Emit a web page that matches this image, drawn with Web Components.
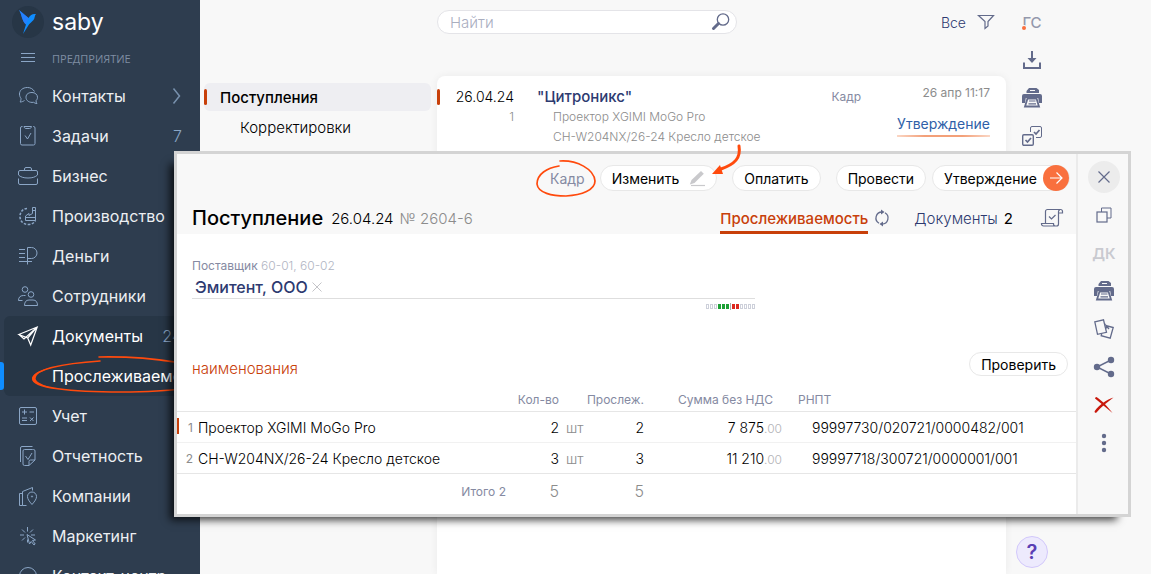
<!DOCTYPE html>
<html lang="ru">
<head>
<meta charset="utf-8">
<title>Saby — Поступления</title>
<style>
  html, body { margin: 0; height: 100%; }
  body {
    font-family: Inter, "Liberation Sans", sans-serif;
    font-size: 14px;
    font-weight: 300;
    color: #000;
    background: #f8f8f8;
    overflow: hidden;
    --accent: #c8400a;
    --muted: #858aa2;
    --gray: #8c8c8c;
    --navy: #2d3a70;
    --icon: #636b8b;
    --line: #e6e6e6;
  }
</style>
</head>
<body>
<saby-app></saby-app>

<script>
const ICONS = {
  bird: [32, 32, `<g stroke="none"><circle cx="16" cy="16" r="16" fill="#273646"/><path d="M7 4l9.500 8c2-3.500 4-4.500 7.500-4-1.500 1.500-1 4-2.500 6-1.500 2-4 3-5.500 6l-5 8 3-9.500C9.500 14.500 10 8.500 7 4z" fill="#0f8dff"/><path d="M7 4l9.500 8-2.500 6.500C9.500 14.500 10 8.500 7 4z" fill="#2f7bff" opacity=".7"/></g>`],
  menu: [16, 12, `<path d="M1 1.500h14M1 5.500h14M1 9.500h14" fill="none" stroke="currentColor"/>`],
  chevron: [10, 18, `<path d="M1.500 1.500L7.500 9l-6 7.500" stroke-width="1.500" opacity=".8"/>`],
  chat: [20, 20, `<path d="M16.500 5.500C15 3 12.500 1.500 9.500 1.500c-5 0-8 3-8 6.500 0 2 .8 3.500 1.500 4.500 0 1.800-.5 3-1 3.500 2 0 3.500-.8 4.500-1.500"/><path d="M14 6.500c3 0 5.500 2 5.500 4.800 0 1.600-.8 2.700-1.500 3.400 0 1.300.5 2.300 1 2.800-1.500 0-2.700-.6-3.500-1.200-4 .6-7.500-1.500-7.500-5s3-4.800 6-4.800z"/>`],
  tasks: [20, 20, `<path d="M4.500.5H4A1.500 1.500 0 0 0 2.500 2v15.500A1.500 1.500 0 0 0 4 19h11.500a1.500 1.500 0 0 0 1.500-1.500V2A1.500 1.500 0 0 0 15.500.5H15M6 .5c.3 1.500 1 2 2 2h3.500c1 0 1.700-.5 2-2zM7 9.500l2.500 3.500L13 7"/>`],
  brief: [20, 20, `<path d="M6.500 4.500V3A1.500 1.500 0 0 1 8 1.500h4A1.500 1.500 0 0 1 13.500 3v1.500M2 4.500h16A1.500 1.500 0 0 1 19.500 6v3c-2 2-5 3-9.500 3S2.500 11 .5 9V6A1.500 1.500 0 0 1 2 4.500zM.5 12.500V17A1.500 1.500 0 0 0 2 18.500h16a1.500 1.500 0 0 0 1.500-1.500v-4.500"/>`],
  factory: [20, 20, `<path d="M7.500 14.500h10V1.500h-3v6l-3.500 2v-2l-3.500 2.500zM7.500 11.500h10M14.500 4.500h3"/><path d="M9 2.500C5 2.500 2 6 2 10.500s3.500 8 8 8c4 0 6.500-2 7.500-4" stroke-width="1.600" stroke-dasharray="2.500 1.500"/>`],
  ruble: [20, 20, `<path d="M9.500 18.500V1.500h4a5 5 0 0 1 0 11H9.500M1 3.500h6M1 7.500h6M1 11.500h6M1 15.500h13"/>`],
  people: [20, 20, `<circle cx="7" cy="3.500" r="2.800"/><circle cx="13" cy="8.500" r="2.800"/><path d="M.5 14.500c0-3 1.500-5 5-5h2M4.500 14.500h-4M6.500 19.500c0-3.500 1.500-5.500 4.500-5.500h4c3 0 4.500 2 4.500 5.500z"/>`],
  plane: [20, 20, `<path d="M.8 8.500L19.200 1l-6.500 18-3-7zM9.700 12L19 1.200M1 8.500l5 4.500L19 1.200" stroke-width="1.200"/>`],
  calc: [20, 20, `<rect x="1.500" y="1.500" width="17" height="17" rx="1.500"/><path d="M4 6h5M6.500 3.500v5M11.500 6h4.500M4 12h5M4 14.500h5M12 11.500l3.500 3.500M15.500 11.500L12 15"/>`],
  report: [20, 20, `<path d="M2.500 16V2A1.500 1.500 0 0 1 4 .5h10.500M14.500 3.500h-8A1.500 1.500 0 0 0 5 5v13A1.500 1.500 0 0 0 6.500 19.500H11l6-5.500V5a1.500 1.500 0 0 0-1.500-1.500zM11 19v-3.500a1.500 1.500 0 0 1 1.500-1.500H17M7.500 10l2.500 3.500L14 7"/>`],
  company: [20, 20, `<path d="M8.500 19.500h-4v-14l10-4v3M4.500 7.500h-3v12h3M14 18.500c-3-3.500-4.500-5.500-4.500-8a4.500 4.500 0 0 1 9 0c0 2.500-1.500 4.500-4.500 8z"/><circle cx="14" cy="10.500" r=".6"/>`],
  marketing: [20, 20, `<path d="M9.500 1v4.500M9.500 13.500v3M2 9h4M13 9h4M4 3.500l3 3M15 3.500l-3 3M4 14.500l3-3M9 8.500l2.500 9.500 1.700-2.500 2.800 3.500 1.200-1-2.700-3.500 3-.5z"/>`],
  head: [20, 20, `<path d="M1.500 14V10a8.500 8.500 0 0 1 17 0v4"/>`],
  search: [18, 18, `<circle cx="11" cy="6.500" r="5.700" stroke-width="1.300"/><path d="M6.500 10.500L1.500 15.500" stroke-width="3" stroke-linecap="round"/>`],
  filter: [16, 16, `<path d="M.5 1.500h15l-5.500 6v4.500L7 14.500v-7z" stroke-width="1.200"/>`],
  download: [20, 20, `<path d="M10 1v9" stroke-width="2"/><path d="M5.500 8h9l-4.500 5z" fill="currentColor" stroke="none"/><path d="M2 12.500V18h16v-5.500" stroke-width="2"/>`],
  printer: [20, 20, `<path d="M7 0h7.500l2.500 2v3H4.500V3z M2 6h16a2 2 0 0 1 2 2v7h-3l-.8-5H3.800L3 15H0V8a2 2 0 0 1 2-2z" fill="currentColor" stroke="none"/><path d="M8 2.500h5M4.500 5.500h11" stroke="#f8f8f8"/><path d="M5.500 10.500h9l2.500 8H3z" fill="#f8f8f8" stroke-width="1.800"/><path d="M7 13h6.500M6.500 15.800h7.500" stroke-width="1.200"/>`],
  checks: [20, 20, `<path d="M8.500 6V2A1.500 1.500 0 0 1 10 .5h8A1.500 1.500 0 0 1 19.500 2v8a1.500 1.500 0 0 1-1.500 1.500h-4"/><rect x=".7" y="8.700" width="10.600" height="10.600" rx="1.200" stroke-width="1.400"/><path d="M3.500 14l2 2 3.500-4M12 6l2 2 3.500-4" stroke-width="1.700"/>`],
  pencil: [16, 18, `<path d="M12 2l2.800 2.800L5.500 14 .8 15.500 2.500 11z" fill="currentColor" stroke="none"/><path d="M2 16.500h14" stroke-width="1.200"/>`],
  arrow: [14, 14, `<path d="M1 7h12M7.500 1.500L13 7l-5.500 5.500" stroke-width="1.200"/>`],
  close: [14, 14, `<path d="M1.500 1.500l11 11M12.500 1.500l-11 11" stroke-width="1.200"/>`],
  clear: [10, 10, `<path d="M.5.5l9 9M9.500.5l-9 9"/>`],
  windows: [16, 16, `<path d="M5.500 5V1h9.500v10h-4"/><rect x="1" y="5" width="10" height="10" stroke-width="1.200"/>`],
  copies: [20, 20, `<path d="M.8 2.800L9.500.8l3 12.500-9 2z" stroke-width="1.300"/><path d="M11.500 6.500l7.700 2-3 10.700-9-2.500.5-2M12.500 9.500l-.5-3 3 3.500" stroke-width="1.300"/>`],
  share: [20, 20, `<path d="M17 3L3 10l14 7" stroke-width="1.400"/><circle cx="17" cy="3" r="3.200" fill="currentColor" stroke="none"/><circle cx="3" cy="10" r="3.200" fill="currentColor" stroke="none"/><circle cx="17" cy="17" r="3.200" fill="currentColor" stroke="none"/>`],
  remove: [20, 18, `<path d="M1 2.500Q1 1 2.500 1C8 4.500 14 11 18.500 17 12.500 12 6 6.500 1 2.500z M.8 15C5 9 12 4 19.500 1.500 13 6.500 7 11 2.500 16.500 1.500 17.500 0 16 .8 15z" fill="currentColor" stroke="none"/>`],
  dots: [6, 20, `<g fill="currentColor" stroke="none"><circle cx="3" cy="3" r="2.200"/><circle cx="3" cy="10" r="2.200"/><circle cx="3" cy="17" r="2.200"/></g>`],
  refresh: [14, 18, `<path d="M4 14.200A6 6 0 0 1 7 3M10 3.800A6 6 0 0 1 7 15" stroke-width="1.300"/><path d="M6 .5l3.500 2.500L6 5.500zM8 17.500L4.500 15 8 12.500z" fill="currentColor" stroke="none"/>`],
  scroll: [22, 18, `<path d="M4.500 14.500V2.500a2 2 0 0 1 2-2h13a2 2 0 0 1 2 2v1.500h-4M19 .8c-1 0-1.500.8-1.500 1.700v12.500a2 2 0 0 1-2 2H2.500a2 2 0 0 1-2-2v-.5h12v.5a2 2 0 0 0 2 2M8 7.500l2.500 2.500L14.500 6" stroke-width="1.200"/>`]
};

/* Registers an element whose open root holds the given styles and markup. */
function define(tag, css, html) {
  customElements.define(tag, class extends HTMLElement {
    connectedCallback() {
      if (this.shadowRoot) return;
      const root = this.attachShadow({ mode: 'open' });
      const tpl = document.createElement('template');
      tpl.innerHTML = `<style>*{box-sizing:border-box}button,input{font:inherit;color:inherit}${css}</style>` +
        (typeof html === 'function' ? html(this) : html);
      root.append(tpl.content.cloneNode(true));
    }
  });
}

define('ui-icon', `:host{display:inline-flex;flex:none}svg{display:block;fill:none;stroke:currentColor;overflow:visible}`,
  el => {
    const [w, h, body] = ICONS[el.getAttribute('name')];
    return `<svg width="${w}" height="${h}" viewBox="0 0 ${w} ${h}" aria-hidden="true">${body}</svg>`;
  });

define('nav-item', `
  :host{display:block;position:relative}
  a{display:flex;align-items:center;height:40px;padding:0 18px;gap:14px;color:#eceff2;text-decoration:none;font-size:16px;font-weight:400;white-space:nowrap}
  ui-icon,.slot-space{color:#8ba6c6;width:20px}
  :host([active]) a,:host([active]) ui-icon{color:#fff}
  .label{flex:1;min-width:0}
  ::slotted(*){color:#8ba6c6;font-weight:300}`,
  el => `<a href="#">${el.hasAttribute('icon') ? `<ui-icon name="${el.getAttribute('icon')}"></ui-icon>` : '<span class="slot-space"></span>'}
    <span class="label">${el.getAttribute('label')}</span><slot></slot></a>`);

define('side-bar', `
  :host{display:block;width:200px;background:#2e3d4f;overflow:hidden;position:relative}
  .brand{display:flex;align-items:center;gap:8px;height:44px;padding:0 12px;color:#fff;font-size:23px;font-weight:400}
  .section{display:flex;align-items:center;height:28px;padding:0 20px;gap:16px;color:#7f8da3;font:11px "Open Sans",sans-serif}
  .section button{border:0;padding:0;background:none;color:#8ba6c6;display:flex}
  nav{display:block;padding-top:4px}
  .group{margin-left:4px;background:#273646;border-radius:6px 0 0 6px;position:relative}
  .group nav-item{margin-left:-4px}
  .current{position:absolute;left:-4px;top:46px;width:4px;height:28px;background:#0f8dff;border-radius:0 3px 3px 0}
  .ring{position:absolute;left:26px;top:38px;pointer-events:none}`,
  `<div class="brand"><ui-icon name="bird"></ui-icon><span>saby</span></div>
   <div class="section"><button aria-label="Меню"><ui-icon name="menu"></ui-icon></button><span>ПРЕДПРИЯТИЕ</span></div>
   <nav>
    <nav-item icon="chat" label="Контакты"><ui-icon name="chevron"></ui-icon></nav-item>
    <nav-item icon="tasks" label="Задачи"><span>7</span></nav-item>
    <nav-item icon="brief" label="Бизнес"></nav-item>
    <nav-item icon="factory" label="Производство"></nav-item>
    <nav-item icon="ruble" label="Деньги"></nav-item>
    <nav-item icon="people" label="Сотрудники"></nav-item>
    <div class="group">
      <nav-item icon="plane" label="Документы" active><span>24</span></nav-item>
      <nav-item label="Прослеживаемость" active></nav-item>
      <span class="current"></span>
      <svg class="ring" width="190" height="42" viewBox="0 0 190 42" fill="none" stroke="#ff4a0d" stroke-linecap="round"><path d="M70 7C40 9 8 13 3 24c-3 10 40 14 88 14 50 0 90-5 92-15C184 11 120 2 69 3" stroke-width="1.600"/><path d="M28 12C12 15 3 19 2 24c0 5 8 8 20 10C10 30 4 27 6 23c1-4 9-8 22-11z" fill="#ff4a0d" stroke="none"/></svg>
    </div>
    <nav-item icon="calc" label="Учет"></nav-item>
    <nav-item icon="report" label="Отчетность"></nav-item>
    <nav-item icon="company" label="Компании"></nav-item>
    <nav-item icon="marketing" label="Маркетинг"></nav-item>
    <nav-item icon="head" label="Контакт-центр"></nav-item>
   </nav>`);

define('folder-list', `
  :host{display:block;padding:83px 6px 0 4px;font-size:15px}
  a{display:flex;align-items:center;height:28px;color:#000;text-decoration:none;white-space:nowrap}
  .on{position:relative;padding-left:16px;background:#eeeef2;border-radius:6px;font-weight:500}
  .on::before{content:"";position:absolute;left:0;top:6px;width:3px;height:16px;background:var(--accent);border-radius:2px}
  .sub{height:32px;padding-left:36px}`,
  `<a class="on" href="#">Поступления</a><a class="sub" href="#">Корректировки</a>`);

define('search-bar', `
  :host{display:flex;align-items:center;justify-content:space-between;height:44px;padding-right:12px;color:var(--navy)}
  label{display:flex;align-items:center;width:300px;height:24px;padding:0 6px 0 12px;border:1px solid #e4e4e8;border-radius:12px;background:#fff}
  input{flex:1;min-width:0;border:0;padding:0;background:none;outline:0;font-size:15px;color:#000}
  input::placeholder{color:#a9aebf;opacity:1}
  ui-icon{color:var(--icon)}
  button{display:flex;align-items:center;gap:12px;border:0;padding:0;background:none;font-size:14px}`,
  `<label><input type="search" placeholder="Найти" aria-label="Найти"><ui-icon name="search"></ui-icon></label>
   <button>Все <ui-icon name="filter"></ui-icon></button>`);

define('receipt-card', `
  :host{display:block;flex:1;background:#fff;border-radius:8px 8px 0 0;box-shadow:0 0 8px rgba(0,0,0,.06)}
  article{position:relative;display:grid;grid-template-columns:77px 1fr auto auto;padding:11px 16px 0 0;font-size:12px;line-height:20px;color:var(--gray);white-space:nowrap}
  article::before{content:"";position:absolute;left:0;top:13px;width:3px;height:16px;background:var(--accent);border-radius:2px}
  .left{text-align:right}
  .date{font-size:14px;color:#000}
  .body{padding-left:23px}
  h3{margin:0;font-size:15px;font-weight:500;color:var(--navy);line-height:20px}
  p{margin:0;padding-left:16px}
  .who{color:var(--muted);font-weight:400}
  .state{padding-left:36px;text-align:right;margin-top:-4px}
  .state div{font-weight:400}
  .state a{display:inline-block;margin-top:12px;height:22px;font-size:14px;font-weight:400;line-height:18px;color:#2f5fa8;text-decoration:none;border-bottom:2px solid;border-image:linear-gradient(90deg,#fbd9c8,#f3a079 30%,#f3a079 70%,#fbd9c8) 1}`,
  `<article><div class="left"><div class="date">26.04.24</div><div>1</div></div>
   <div class="body"><h3>"Цитроникс"</h3><p>Проектор XGIMI MoGo Pro</p><p>CH-W204NX/26-24 Кресло детское</p></div>
   <div class="who">Кадр</div>
   <div class="state"><div>26 апр 11:17</div><a href="#">Утверждение</a></div></article>`);

define('tool-rail', `
  :host{display:flex;flex-direction:column;align-items:center;color:var(--icon)}
  button{display:flex;align-items:center;justify-content:center;width:38px;height:38px;border:0;padding:0;background:none}
  .initials{position:relative;font-size:15px;font-weight:500;height:38px;margin-top:3px;color:#9498ac}
  .initials::after{content:"";position:absolute;left:9px;top:23px;width:4px;height:4px;border-radius:50%;background:#f9703e;box-shadow:0 0 0 1px #f8f8f8}
  .help{width:32px;height:32px;margin:auto 0 6px;border:1px solid #d2c8fb;border-radius:50%;background:#edeafd;color:#5a3fb5;font-size:20px;font-weight:600}`,
  `<button class="initials">ГС</button>
   <button aria-label="Скачать"><ui-icon name="download"></ui-icon></button>
   <button aria-label="Печать"><ui-icon name="printer"></ui-icon></button>
   <button aria-label="Отметить"><ui-icon name="checks"></ui-icon></button>
   <button class="help">?</button>`);

define('pill-button', `
  :host{display:inline-block}
  button{display:flex;align-items:center;gap:10px;height:26px;padding:0 11px;border:1px solid #e8e8e8;border-radius:13px;background:#fff;font-size:14px;font-weight:400;color:#000;white-space:nowrap}
  :host([primary]) button{padding-right:0;gap:6px}
  :host([plain]) button{height:24px}
  ::slotted(ui-icon){color:#c9c9cc}`,
  `<button><slot></slot></button>`);

define('balance-meter', `
  :host{display:flex;gap:1px;align-items:center;height:6px}
  i{width:3px;height:5px;border:1px solid #cdd0da}
  .g{background:#1ba034;border-color:#1ba034}.r{background:#dc281e;border-color:#dc281e}
  b{width:1px;height:7px;background:#aaa}`,
  `<i></i><i></i><i></i><i class="g"></i><i class="g"></i><i class="g"></i><b></b><i class="r"></i><i class="r"></i><i></i><i></i><i></i><i></i>`);

define('goods-table', `
  :host{display:block}
  table{width:100%;border-collapse:collapse;table-layout:fixed;font-size:14px;white-space:nowrap}
  th,td{padding:0;text-align:right;font-weight:inherit}
  th,.idx,.sum-label{font-size:12px;color:var(--muted);font-weight:400}
  th{height:23px}
  tbody td{height:31px;padding-top:2px;border-top:1px solid var(--line)}
  tbody tr + tr td{border-top-color:#f1f1f1}
  tfoot td{height:36px;border-top:1px solid var(--line);font-size:16px;color:var(--gray)}
  tfoot .sum-label{font-size:12px}
  .idx{padding-right:5px;color:var(--gray);position:relative}
  .now::before{content:"";position:absolute;left:0;top:6px;width:2px;height:16px;background:var(--accent)}
  .name,.unit,.code{text-align:left}
  .unit{padding-left:7px;color:var(--gray)}
  small{font-size:12px;color:#b4b4b8}
  th.sum{padding-right:9px}
  th.code{padding-left:16px}
  td.code{padding-left:30px}`,
  `<table><colgroup><col style="width:21px"><col><col style="width:53px"><col style="width:27px"><col style="width:58px"><col style="width:138px"><col style="width:294px"></colgroup>
   <thead><tr><th></th><th></th><th>Кол-во</th><th></th><th>Прослеж.</th><th class="sum">Сумма без НДС</th><th class="code">РНПТ</th></tr></thead>
   <tbody>
   <tr><td class="idx now">1</td><td class="name">Проектор XGIMI MoGo Pro</td><td>2</td><td class="unit">шт</td><td>2</td><td>7 875<small>.00</small></td><td class="code">99997730/020721/0000482/001</td></tr>
   <tr><td class="idx">2</td><td class="name">CH-W204NX/26-24 Кресло детское</td><td>3</td><td class="unit">шт</td><td>3</td><td>11 210<small>.00</small></td><td class="code">99997718/300721/0000001/001</td></tr>
   </tbody>
   <tfoot><tr><td></td><td class="sum-label">Итого 2</td><td>5</td><td></td><td>5</td><td></td><td></td></tr></tfoot></table>`);

define('receipt-dialog', `
  :host{display:flex;background:#fff;border:3px solid #d4d4d4;box-shadow:-9px 8px 8px -5px rgba(0,0,0,.75)}
  .doc{flex:1;min-width:0;padding-bottom:5px}
  header{background:#f8f8f8;height:80px}
  .actions{display:flex;align-items:center;justify-content:flex-end;height:48px;padding:0 6px 0 16px}
  .author{position:relative;padding:0 15px;font-size:14px;font-weight:400;color:var(--muted)}
  .ring{position:absolute;left:0;top:-10px}
  .edit,.pay{margin-right:15px}
  .post{margin-right:6px}
  .go{display:flex;align-items:center;justify-content:center;width:26px;height:26px;border-radius:50%;background:#f9703e;color:#fff}
  .go ui-icon{color:#fff}
  .title{display:flex;align-items:center;height:32px;padding:0 13px 0 15px;font-size:15px;white-space:nowrap}
  h1{margin:0 8px 0 0;font-size:20px;line-height:28px;font-weight:500}
  .num{margin-left:6px;color:var(--gray)}
  .tabs{margin-left:auto;display:flex;align-items:center;height:32px}
  .tabs a{display:flex;align-items:center;height:32px;color:var(--navy);text-decoration:none}
  .tabs a.on{font-weight:500;color:var(--accent);border-bottom:3px solid var(--accent);padding-top:3px}
  .tabs ui-icon{color:var(--icon);margin-left:7px}
  .tabs .docs{margin-left:25px;gap:6px}
  .tabs b{font-weight:400;color:#000}
  .tabs ui-icon.list{margin-left:28px}
  .supplier{width:563px;margin:22px 0 0 15px}
  .caption{font-size:12px;line-height:20px;color:var(--muted);font-weight:400}
  .caption span{color:#b0b4c2;font-weight:300}
  .value{display:flex;align-items:center;gap:4px;height:23px;padding-left:3px;border-bottom:1px solid #dedede;font-size:16px;font-weight:500}
  .value a{color:var(--navy);text-decoration:none}
  .value button{display:flex;border:0;padding:0;background:none;color:#c4c4c8}
  balance-meter{margin-top:4px;justify-content:flex-end}
  .goods{display:flex;align-items:flex-end;justify-content:space-between;margin-top:41px;height:26px;padding:0 8px 0 15px}
  h2{margin:0;font-size:15px;line-height:14px;font-weight:300;color:var(--accent)}
  goods-table{margin-top:12px}
  .rail{display:flex;flex-direction:column;align-items:center;width:52px;padding:4px 0 0 2px;background:#f8f8f8;border-left:2px solid #ebebeb;color:var(--icon)}
  .rail button{display:flex;align-items:center;justify-content:center;width:38px;height:38px;border:0;padding:0;background:none}
  .rail .close{width:32px;height:32px;margin:3px 0;border-radius:50%;background:#ececec}
  .rail .off{color:#c9cad0;font-size:15px;font-weight:600}
  .rail .del{color:#c8180c}`,
  `<section class="doc">
    <header>
      <div class="actions">
        <span class="author">Кадр<svg class="ring" width="62" height="38" viewBox="0 0 62 38" fill="none" stroke="#ff4a0d" stroke-linecap="round"><path d="M24 6C12 8 2 14 2 24c1 9 15 12 29 12 16-1 29-6 29-15C59 9 42 0 25 1" stroke-width="1.700"/></svg></span>
        <pill-button class="edit">Изменить<ui-icon name="pencil"></ui-icon></pill-button>
        <pill-button class="pay">Оплатить</pill-button>
        <pill-button class="post">Провести</pill-button>
        <pill-button primary>Утверждение<span class="go"><ui-icon name="arrow"></ui-icon></span></pill-button>
      </div>
      <div class="title"><h1>Поступление</h1><span>26.04.24</span><span class="num">№ 2604-6</span>
        <nav class="tabs"><a class="on" href="#">Прослеживаемость</a><ui-icon name="refresh"></ui-icon><a class="docs" href="#">Документы <b>2</b></a><ui-icon class="list" name="scroll"></ui-icon></nav>
      </div>
    </header>
    <div class="supplier">
      <div class="caption">Поставщик <span>60-01, 60-02</span></div>
      <div class="value"><a href="#">Эмитент, ООО</a><button aria-label="Очистить"><ui-icon name="clear"></ui-icon></button></div>
      <balance-meter></balance-meter>
    </div>
    <div class="goods"><h2>наименования</h2><pill-button plain>Проверить</pill-button></div>
    <goods-table></goods-table>
   </section>
   <aside class="rail">
    <button class="close" aria-label="Закрыть"><ui-icon name="close"></ui-icon></button>
    <button aria-label="В новом окне"><ui-icon name="windows"></ui-icon></button>
    <button class="off">ДК</button>
    <button aria-label="Печать"><ui-icon name="printer"></ui-icon></button>
    <button aria-label="Копировать"><ui-icon name="copies"></ui-icon></button>
    <button aria-label="Поделиться"><ui-icon name="share"></ui-icon></button>
    <button class="del" aria-label="Удалить"><ui-icon name="remove"></ui-icon></button>
    <button aria-label="Ещё"><ui-icon name="dots"></ui-icon></button>
   </aside>`);

define('hint-arrow', `:host{display:block;pointer-events:none}svg{display:block}`,
  `<svg width="32" height="34" viewBox="0 0 32 34"><path d="M28 3c2 12-4 18-18 23" fill="none" stroke="#ff4a0d" stroke-width="3" stroke-linecap="round"/><path d="M1 31l8-9 3 9z" fill="#ff4a0d"/></svg>`);

define('saby-app', `
  :host{display:grid;grid-template-columns:200px 237px 1fr 52px;height:100vh;padding-right:93px;position:relative;overflow:hidden}
  main{display:flex;flex-direction:column;gap:32px;min-width:0}
  receipt-dialog{position:absolute;left:174px;right:20px;top:151px}
  hint-arrow{position:absolute;right:408px;top:143px}`,
  `<side-bar></side-bar><folder-list></folder-list>
   <main><search-bar></search-bar><receipt-card></receipt-card></main>
   <tool-rail></tool-rail>
   <receipt-dialog role="dialog"></receipt-dialog>
   <hint-arrow></hint-arrow>`);
</script>
</body>
</html>
